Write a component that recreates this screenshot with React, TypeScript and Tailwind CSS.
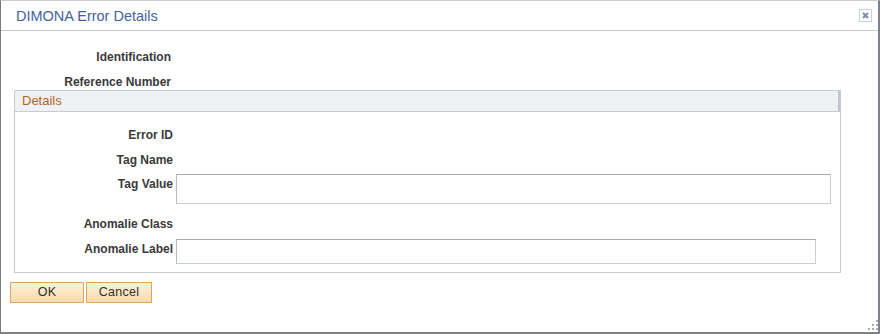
import React from 'react';

const FONT = "font-['Liberation_Sans',Arial,sans-serif]";

const Label: React.FC<{ text: string; width: string }> = ({ text, width }) => (
  <div className={`${width} h-[20px] flex items-center justify-end text-[12px] font-bold text-[#3a3a3a] whitespace-nowrap`}>
    {text}
  </div>
);

const Field: React.FC<{ width: string; height: string }> = ({ width, height }) => (
  <div
    className={`${width} ${height} bg-white border border-[#c8cdd3] border-t-[#a3aab2] border-l-[#b6bcc3]`}
  />
);

const Button: React.FC<{ text: string; width: string }> = ({ text, width }) => (
  <button
    className={`${width} h-[21px] border border-[#e0a462] bg-gradient-to-b from-[#fdf0d8] to-[#f9dcae] text-[12.5px] tracking-[0.3px] text-[#2e2e2e] flex items-center justify-center`}
  >
    {text}
  </button>
);

export default function App() {
  return (
    <div
      className={`${FONT} relative w-[880px] h-[334px] bg-white border-l border-t border-r-2 border-b-2 border-l-[#777c82] border-t-[#c9cdd2] border-r-[#7d8288] border-b-[#7d8288] flex flex-col`}
    >
      {/* title bar */}
      <div className="h-[30px] flex items-center justify-between border-b border-[#c4c9cf] pl-[15px] pr-[6px]">
        <span className="text-[14.5px] text-[#46639a] mt-[2px]">DIMONA Error Details</span>
        <div className="w-[13px] h-[13px] border border-[#c9ced8] bg-white flex items-center justify-center">
          <svg width="7" height="7" viewBox="0 0 7 7">
            <path d="M1 1L6 6M6 1L1 6" stroke="#7f8ea3" strokeWidth="2" />
          </svg>
        </div>
      </div>

      {/* header fields */}
      <div className="pt-[14px] flex flex-col">
        <div className="h-[24px] flex items-center">
          <Label text="Identification" width="w-[170px]" />
        </div>
        <div className="h-[21px] pt-[4px] flex items-center">
          <Label text="Reference Number" width="w-[170px]" />
        </div>
      </div>

      {/* details group */}
      <div className="ml-[13px] w-[827px] border border-[#c6ccd2] flex flex-col">
        <div className="h-[21px] bg-[#eef2f4] border-b border-r-2 border-[#c6ccd2] border-r-[#bfc5cc] pl-[7px] flex items-center text-[13px] text-[#b3651e]">
          Details
        </div>
        <div className="flex flex-col pt-[13px] pb-[8px]">
          <div className="flex">
            <Label text="Error ID" width="w-[158px]" />
          </div>
          <div className="flex mt-[5px]">
            <Label text="Tag Name" width="w-[158px]" />
          </div>
          <div className="flex items-start gap-[3px] mt-[4px]">
            <Label text="Tag Value" width="w-[158px]" />
            <Field width="w-[655px]" height="h-[30px]" />
          </div>
          <div className="flex mt-[10px]">
            <Label text="Anomalie Class" width="w-[158px]" />
          </div>
          <div className="flex items-start gap-[3px] mt-[5px]">
            <Label text="Anomalie Label" width="w-[158px]" />
            <Field width="w-[640px]" height="h-[25px]" />
          </div>
        </div>
      </div>

      {/* buttons */}
      <div className="flex gap-[2px] ml-[9px] mt-[9px]">
        <Button text="OK" width="w-[74px]" />
        <Button text="Cancel" width="w-[66px]" />
      </div>

      {/* resize grip */}
      <svg className="absolute right-0 bottom-[2px]" width="10" height="10" viewBox="0 0 10 10">
        <rect x="8" y="0" width="2" height="2" fill="#a5a9ae" />
        <rect x="4" y="4" width="2" height="2" fill="#a5a9ae" />
        <rect x="8" y="4" width="2" height="2" fill="#a5a9ae" />
        <rect x="0" y="8" width="2" height="2" fill="#a5a9ae" />
        <rect x="4" y="8" width="2" height="2" fill="#a5a9ae" />
        <rect x="8" y="8" width="2" height="2" fill="#a5a9ae" />
      </svg>
    </div>
  );
}
